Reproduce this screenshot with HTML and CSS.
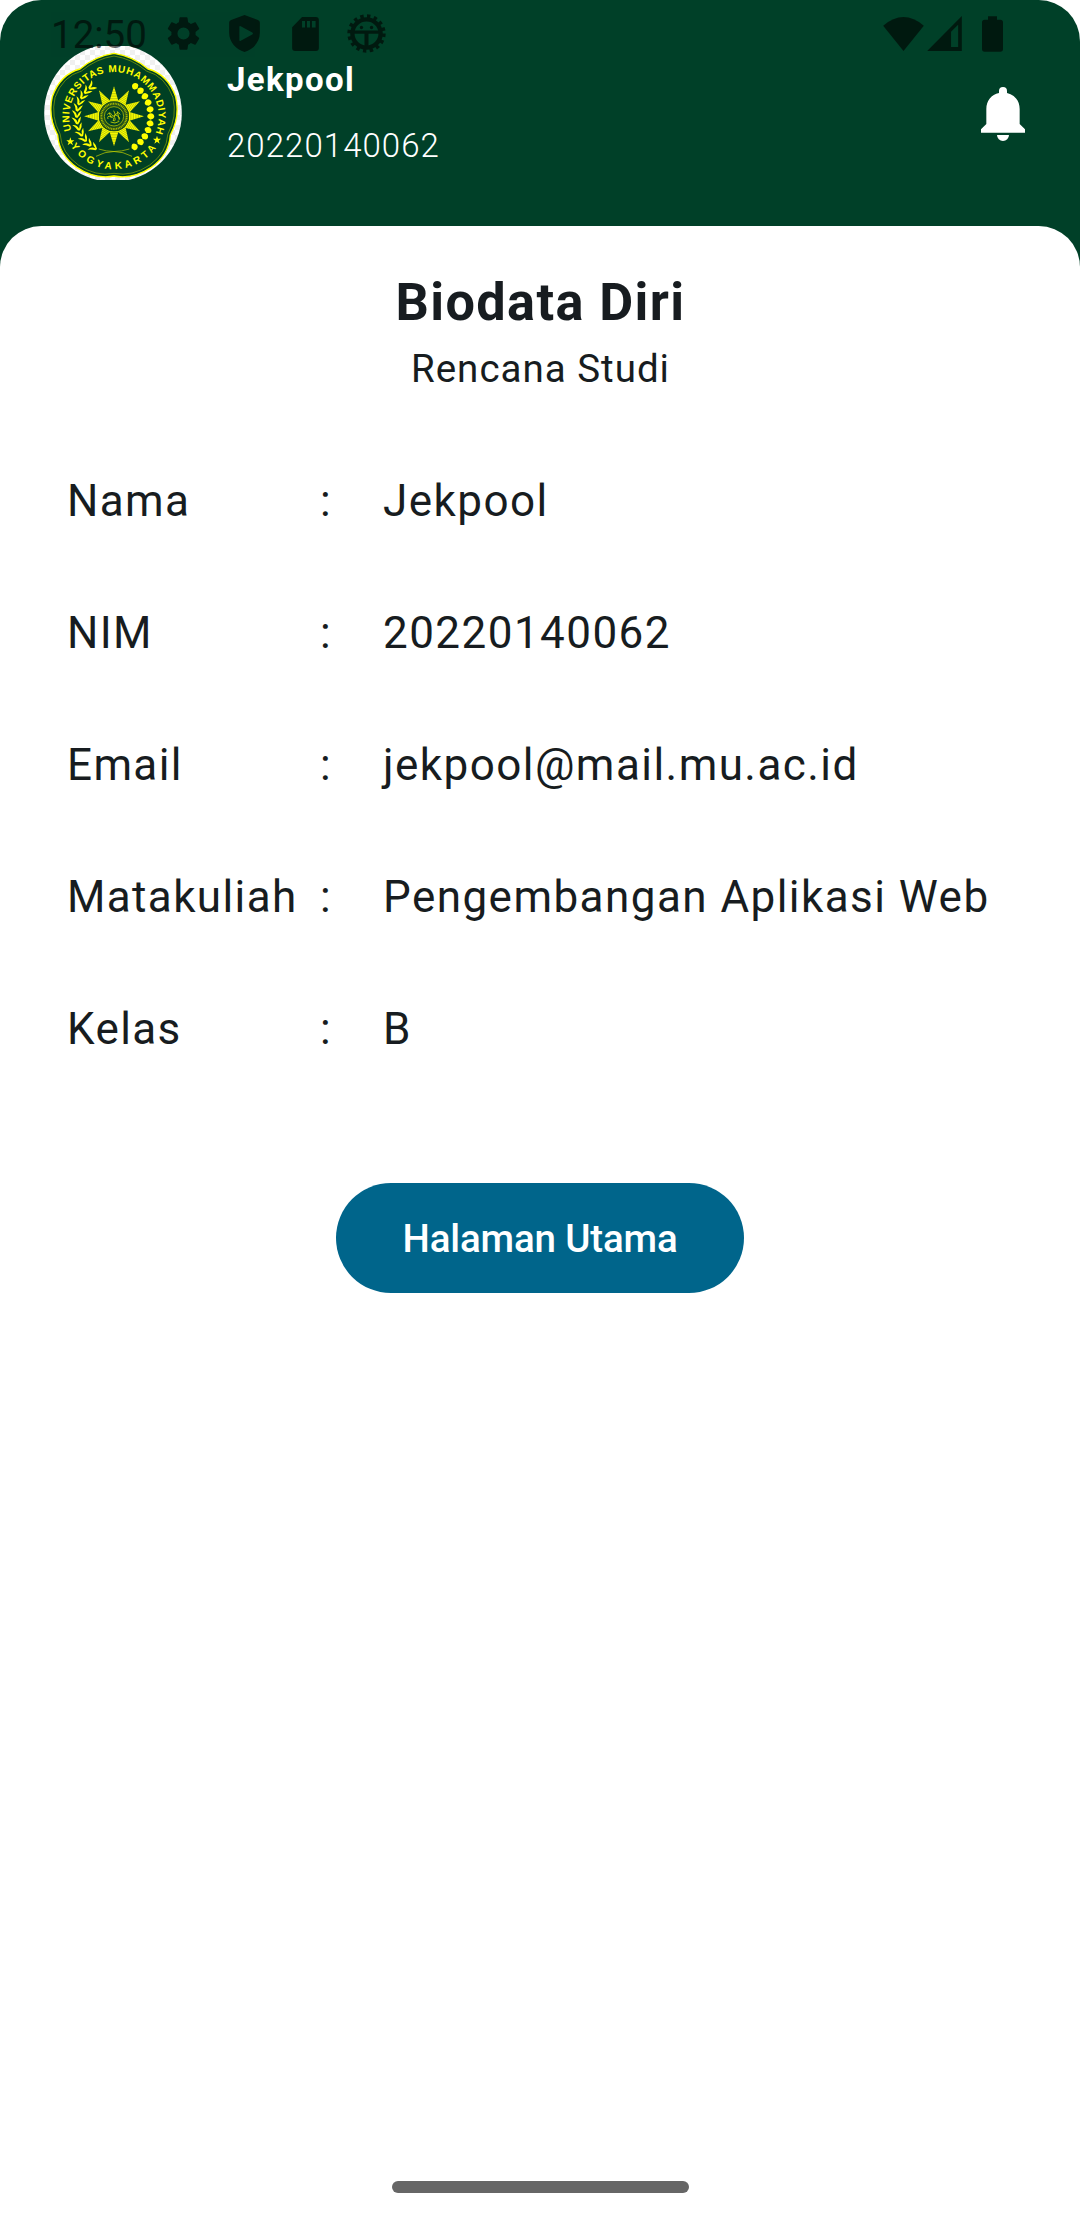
FILE: index.html
```html
<!DOCTYPE html>
<html lang="id">
<head>
<meta charset="utf-8">
<title>Biodata Diri</title>
<link rel="stylesheet" href="styles.css">
</head>
<body>
<div class="screen">
  <div class="status-bar">
    <span class="clock">12:50</span>
    <svg class="gear" viewBox="2.2 2 19.6 20"><path d="M19.14 12.94c.04-.3.06-.61.06-.94 0-.32-.02-.64-.07-.94l2.03-1.58c.18-.14.23-.41.12-.61l-1.92-3.32c-.12-.22-.37-.29-.59-.22l-2.39.96c-.5-.38-1.03-.7-1.62-.94l-.36-2.54c-.04-.24-.24-.41-.48-.41h-3.84c-.24 0-.43.17-.47.41l-.36 2.54c-.59.24-1.13.57-1.62.94l-2.39-.96c-.22-.08-.47 0-.59.22L2.74 8.87c-.12.21-.08.47.12.61l2.03 1.58c-.05.3-.09.63-.09.94s.02.64.07.94l-2.03 1.58c-.18.14-.23.41-.12.61l1.92 3.32c.12.22.37.29.59.22l2.39-.96c.5.38 1.03.7 1.62.94l.36 2.54c.05.24.24.41.48.41h3.84c.24 0 .44-.17.47-.41l.36-2.54c.59-.24 1.13-.56 1.62-.94l2.39.96c.22.08.47 0 .59-.22l1.92-3.32c.12-.22.07-.47-.12-.61l-2.01-1.58zM12 15.6A3.6 3.6 0 1 1 12 8.4a3.6 3.6 0 0 1 0 7.2z"/></svg>
    <svg class="shield" viewBox="0 0 93 112"><path fill-rule="evenodd" d="M46.500 0 87 15Q93 17 93 23V54C93 82 72 105 46.500 112 21 105 0 82 0 54V23Q0 17 6 15ZM31 36V76Q31 80 35 78L70 59Q74 56 70 53L35 34Q31 32 31 36Z"/></svg>
    <svg class="sdcard" viewBox="0 0 81 103"><path fill-rule="evenodd" d="M30 0H72Q81 0 81 9V94Q81 103 72 103H9Q0 103 0 94V31ZM30 12V32H39V12ZM45 12V32H54V12ZM60 12V32H71V12Z"/></svg>
    <svg class="debug" viewBox="-58 -58 116 116">
      <circle r="42" fill="none" stroke="#000" stroke-width="13"/>
      <circle r="51" fill="none" stroke="#000" stroke-width="12" stroke-dasharray="10 10.030"/>
      <path d="M-42-9H42V1H6V42H-6V1H-42Z"/>
      <circle cx="-15" cy="-18" r="5"/><circle cx="15" cy="-18" r="5"/>
    </svg>
    <span class="spacer"></span>
    <svg class="wifi" viewBox="0 0 122 102"><path d="M0 26Q61-26 122 26L61 102Z"/></svg>
    <svg class="signal" viewBox="0 0 103 104"><path fill-rule="evenodd" d="M0 104 103 0V104ZM71 47V92H92V26Z"/></svg>
    <svg class="battery" viewBox="0 0 63 106"><path d="M18 0H45V10H55Q63 10 63 18V98Q63 106 55 106H8Q0 106 0 98V18Q0 10 8 10H18Z"/></svg>
  </div>

  <header class="header">
    <svg class="logo" viewBox="132 138 414 402">
      <defs>
        <pattern id="checker" width="30" height="30" patternUnits="userSpaceOnUse"><path fill="#fff" d="M0 0h30v30H0z"/><path fill="#f0f0f0" d="M0 0h15v15H0zM15 15h15v15H15z"/></pattern>
        <pattern id="hatch" width="4" height="5" patternUnits="userSpaceOnUse"><path fill="#ff0" d="M0 0h4v5H0z"/><path fill="#7d9a0c" d="M0 0h4v1.500H0z"/></pattern>
        <path id="arc-top" d="M214.400 391A134 134 0 1 1 469.600 391"/>
        <path id="arc-bottom" d="M212 438A156 156 0 0 0 472 438"/>
        <path id="badge" d="M342 160Q286 168 240 207Q181 223 157 290Q143 350 173 405Q177 464 230 502Q285 539 342 528Q399 539 454 502Q507 464 511 405Q541 350 527 290Q503 223 444 207Q398 168 342 160Z"/>
        <path id="star" d="M0-13 3-4H12L5 2 8 11 0 5-8 11-5 2-12-4H-3Z"/>
        <path id="leaf" d="M-116 7Q-119-5-127-14Q-113-11-111 3Q-107-9-98-13Q-101 2-110 9Z"/>
        <path id="boll" d="M103-6Q111-13 118-6Q124 2 117 7L109 10 102 5Q97 0 103-6Z"/>
        <path id="ray" d="M-14-44 0-90 14-44Z"/>
      </defs>
      <circle cx="339" cy="339" r="206.500" fill="url(#checker)"/>
      <use href="#badge" fill="#004023" stroke="#ff0" stroke-width="4"/>
      <use href="#badge" fill="none" stroke="#a3b900" stroke-width="1.800" transform="translate(342 346) scale(.956) translate(-342 -346)"/>
      <g class="ring-text">
        <text><textPath href="#arc-top" textLength="513">UNIVERSITAS MUHAMMADIYAH</textPath></text>
        <text><textPath href="#arc-bottom" textLength="300">YOGYAKARTA</textPath></text>
      </g>
      <g fill="#ff0">
        <use href="#star" x="211" y="425"/><use href="#star" x="471" y="420"/>
        <g transform="translate(342 349)">
          <use href="#leaf" transform="rotate(52)"/><use href="#leaf" transform="rotate(42)"/><use href="#leaf" transform="rotate(32)"/><use href="#leaf" transform="rotate(22)"/><use href="#leaf" transform="rotate(12)"/><use href="#leaf" transform="rotate(2)"/><use href="#leaf" transform="rotate(-8)"/><use href="#leaf" transform="rotate(-18)"/><use href="#leaf" transform="rotate(-28)"/><use href="#leaf" transform="rotate(-38)"/><use href="#leaf" transform="rotate(-48)"/><use href="#leaf" transform="rotate(-58)"/>
          <use href="#boll" transform="rotate(-55)"/><use href="#boll" transform="rotate(-44)"/><use href="#boll" transform="rotate(-33)"/><use href="#boll" transform="rotate(-22)"/><use href="#boll" transform="rotate(-11)"/><use href="#boll"/><use href="#boll" transform="rotate(11)"/><use href="#boll" transform="rotate(22)"/><use href="#boll" transform="rotate(33)"/><use href="#boll" transform="rotate(44)"/><use href="#boll" transform="rotate(56)"/>
        </g>
      </g>
      <path d="M288 469Q342 440 396 469M296 447Q342 462 388 447" fill="none" stroke="#c5d300" stroke-width="2"/>
      <g transform="translate(342 349)" fill="url(#hatch)">
        <use href="#ray"/><use href="#ray" transform="rotate(30)"/><use href="#ray" transform="rotate(60)"/><use href="#ray" transform="rotate(90)"/><use href="#ray" transform="rotate(120)"/><use href="#ray" transform="rotate(150)"/><use href="#ray" transform="rotate(180)"/><use href="#ray" transform="rotate(210)"/><use href="#ray" transform="rotate(240)"/><use href="#ray" transform="rotate(270)"/><use href="#ray" transform="rotate(300)"/><use href="#ray" transform="rotate(330)"/>
        <circle r="45" fill="#204f19"/>
        <circle r="38" fill="none" stroke="#a9b800" stroke-width="6" stroke-dasharray="3 2"/>
        <circle r="29" fill="#004023" stroke="#c8d400" stroke-width="2"/>
        <path d="M-20-5Q-13-16-7-5T7-8Q13-16 19-6M-18 8Q-22-3-9 1T-3 12Q7 17 2 3T12 0Q22 5 12 13M-10 17Q3 24 16 15M-1-17 5-3M-14-10-8 5M10-15 15 8" fill="none" stroke="#ced900" stroke-width="2.500"/>
      </g>
    </svg>
    <div class="identity">
      <div class="name">Jekpool</div>
      <div class="nim">20220140062</div>
    </div>
    <svg class="bell" viewBox="0 0 132 162"><path fill="#fff" d="M54 18V12a12 12 0 0 1 24 0V18C101 23 116 41 116 66V111L132 127V137H0V127L16 111V66C16 41 31 23 54 18ZM48 144H84A18 18 0 0 1 48 144Z"/></svg>
  </header>

  <main class="panel">
    <h1 class="title">Biodata Diri</h1>
    <div class="subtitle">Rencana Studi</div>
    <div class="biodata">
      <span>Nama</span><span>:</span><span class="value">Jekpool</span>
      <span>NIM</span><span>:</span><span class="value">20220140062</span>
      <span>Email</span><span>:</span><span class="value">jekpool@mail.mu.ac.id</span>
      <span>Matakuliah</span><span>:</span><span class="value">Pengembangan Aplikasi Web</span>
      <span>Kelas</span><span>:</span><span class="value">B</span>
    </div>
    <button class="home-button">Halaman Utama</button>
    <div class="nav-handle"></div>
  </main>
</div>
</body>
</html>
```
FILE: styles.css
```css
* { box-sizing: border-box; }
body { margin: 0; background: #fff; font-family: Roboto, "Liberation Sans", sans-serif; color: #171c20; }
svg { display: block; flex: none; }

.screen {
  position: relative;
  display: flex;
  flex-direction: column;
  width: 1080px;
  height: 2220px;
  background: #004028;
  border-radius: 41.25px 41.25px 0 0;
  overflow: hidden;
}

/* Translucent system bar laid over the app header */
.status-bar {
  position: absolute;
  z-index: 1;
  top: 0;
  left: 0;
  display: flex;
  align-items: center;
  width: 1080px;
  height: 67px;
  padding: 0 77px 0 51px;
  opacity: .6;
  color: #000;
}
.clock { width: 116px; font-size: 38.5px; line-height: 67px; padding-top: 2px; }
.gear { width: 33px; height: 35px; }
.shield { width: 31px; height: 37px; margin-left: 29px; }
.sdcard { width: 27px; height: 34px; margin-left: 32px; }
.debug { width: 39px; height: 39px; margin-left: 28px; }
.spacer { flex: 1; }
.wifi { width: 41px; height: 34px; margin-right: 3px; }
.signal { width: 35px; height: 35px; margin-right: 20px; }
.battery { width: 21px; height: 36px; }

.header {
  display: flex;
  flex: none;
  align-items: flex-start;
  height: 226px;
  padding: 46px 55px 0 44px;
  color: #fff;
}
.logo { width: 138px; height: 134px; }
.ring-text {
  fill: #ff0;
  font: bold 30px "Liberation Sans", sans-serif;
}
.identity { flex: 1; margin-left: 45px; padding-top: 1px; font-size: 33px; line-height: 66px; letter-spacing: 1.375px; }
.name { font-weight: 700; }
.nim { font-weight: 300; letter-spacing: 1.05px; }
.bell { width: 44px; height: 54px; margin-top: 41px; }

.panel {
  display: flex;
  flex: 1;
  flex-direction: column;
  align-items: center;
  padding-top: 44px;
  background: #fff;
  border-radius: 41.25px 41.25px 0 0;
}
.title { margin: 0; padding-left: 1px; font-size: 52.25px; font-weight: 700; line-height: 66px; letter-spacing: 1.375px; }
.subtitle { padding-left: 1px; font-size: 38.5px; line-height: 66px; letter-spacing: 1px; }
.biodata {
  display: grid;
  grid-template-columns: 253px 63px 1fr;
  row-gap: 66px;
  align-self: stretch;
  margin: 66px 0 121px;
  padding-left: 67px;
  font-size: 44px;
  line-height: 66px;
  letter-spacing: 1.375px;
}
.value { letter-spacing: 1.45px; }
.home-button {
  width: 408px;
  height: 110px;
  border: 0;
  border-radius: 55px;
  background: #00658b;
  color: #fff;
  font: 500 38.5px/55px Roboto, "Liberation Sans", sans-serif;
  letter-spacing: -.15px;
}
.nav-handle { width: 297px; height: 11.500px; margin: auto 0 27.500px; border-radius: 6px; background: #666; }
```
